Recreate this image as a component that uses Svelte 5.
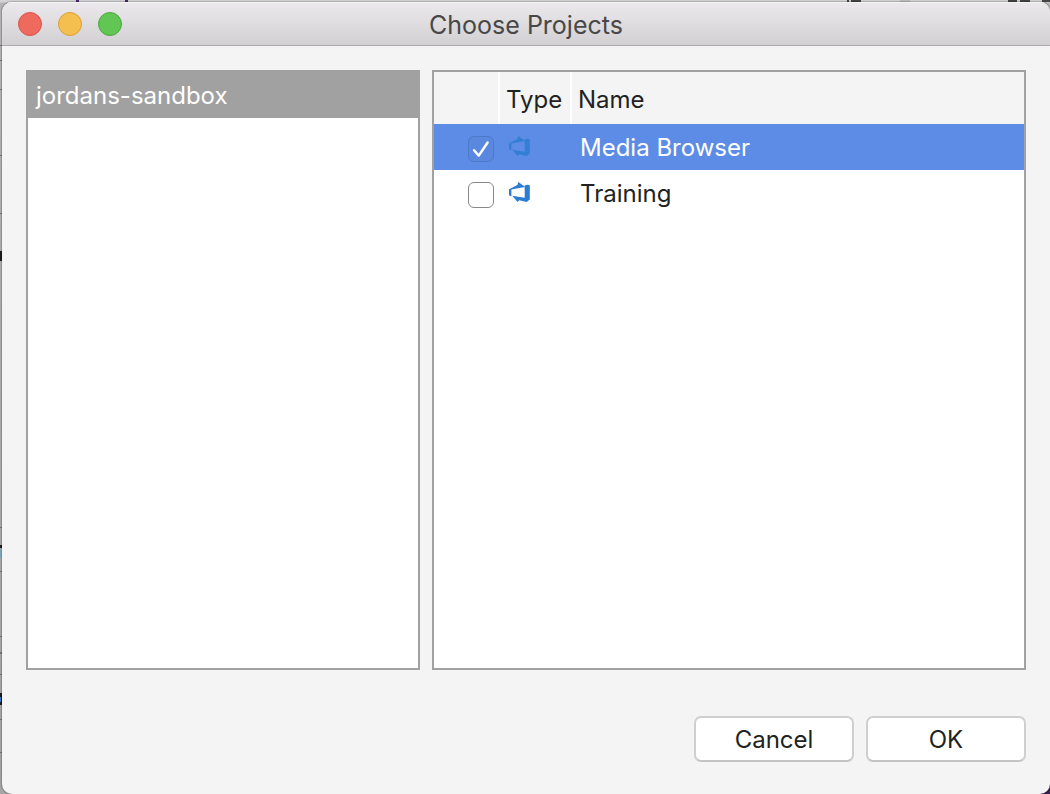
<script>
  const accounts = ['jordans-sandbox'];
  let activeAccount = $state('jordans-sandbox');
  let activeProject = $state('Media Browser');
  let projects = $state([
    { name: 'Media Browser', checked: true },
    { name: 'Training', checked: false },
  ]);
</script>

<div class="desktop">
  <svg class="behind" width="1050" height="794" aria-hidden="true">
    <path fill="#4b2a74" d="M76 0h3v2h-3zM125 0h3v2h-3z" />
    <path fill="#444" d="M847 0h2v2h-2zM851 0h10v2h-10zM1008 0h9v2h-9zM1020 0h10v2h-10zM1042 0h8v2h-8z" />
    <path fill="#bdbdbd" d="M900 0h10v2h-10z" />
    <path fill="#777" d="M0 45h2v1H0zM0 60h2v1H0zM0 89h2v1H0zM0 155h2v1H0zM0 213h2v1H0zM0 527h2v1H0zM0 571h2v1H0zM0 636h2v1H0zM0 652h2v2H0zM0 674h2v1H0zM0 719h2v1H0zM0 752h2v1H0z" />
    <path fill="#1d1d20" d="M0 251h2v10H0zM0 545h2v3H0zM0 693h2v12H0z" />
    <path fill="#7fa9ba" d="M0 549h1v9H0z" />
    <path fill="#3a78c0" d="M0 697h1v5H0z" />
    <path fill="#392052" d="M1038 782h12v12h-12z" />
  </svg>
  <main class="window">
    <header class="titlebar">
      <div class="lights">
        <button class="light close" aria-label="Close"></button>
        <button class="light minimize" aria-label="Minimize"></button>
        <button class="light expand" aria-label="Zoom"></button>
      </div>
      <h1>Choose Projects</h1>
    </header>

    <div class="content">
      <div class="panels">
        <nav class="panel accounts" aria-label="Accounts">
          {#each accounts as account}
            <button
              class="account"
              class:active={account === activeAccount}
              onclick={() => (activeAccount = account)}>{account}</button>
          {/each}
        </nav>

        <section class="panel" aria-label="Projects">
          <table>
            <thead>
              <tr>
                <th class="pick" aria-label="Selected"></th>
                <th class="type">Type</th>
                <th class="name">Name</th>
              </tr>
            </thead>
            <tbody>
              {#each projects as project, i}
                <tr
                  class:selected={project.name === activeProject}
                  onclick={() => (activeProject = project.name)}>
                  <td class="pick">
                    <span class="check">
                      <input type="checkbox" aria-labelledby="project-{i}" bind:checked={project.checked} />
                      <svg viewBox="0 0 26 26" width="26" height="26" aria-hidden="true">
                        <path d="M6 14.2 10.8 19.6 19.6 6.5" fill="none" stroke="#fff" stroke-width="2.4" stroke-linecap="round" stroke-linejoin="round" />
                      </svg>
                    </span>
                  </td>
                  <td class="type">
                    <svg class="service" viewBox="-1 0 22 22" width="22" height="22" aria-hidden="true">
                      <path fill="#2b7cd3" d="M0 7.2 8.4 2.9 9.3 0 15.2 4.2 15.7 5 2.4 7.5V14H1.4L0 13.2ZM15.7 3.6 18 2.7 20.8 3.3V17.6L17.7 20 10.2 18.2 8.6 20 3.2 13.8 15.7 15.7Z" />
                    </svg>
                  </td>
                  <td class="name" id="project-{i}">{project.name}</td>
                </tr>
              {/each}
            </tbody>
          </table>
        </section>
      </div>

      <footer>
        <button class="action">Cancel</button>
        <button class="action">OK</button>
      </footer>
    </div>
  </main>
</div>

<style>
  :global(body) {
    margin: 0;
  }

  .desktop {
    position: relative;
    display: flex;
    box-sizing: border-box;
    min-height: 100vh;
    padding: 2px 0 0 2px;
    overflow: hidden;
    background: linear-gradient(#d4d4d4 2px, #b4b4b4 3px, #a5a5a5);
    color: #222;
    font-family: Inter, sans-serif;
    font-size: 24px;
    line-height: 32px;
  }

  .behind {
    position: absolute;
    top: 0;
    left: 0;
  }

  .window {
    position: relative;
    display: flex;
    flex: 1;
    flex-direction: column;
    overflow: hidden;
    border-radius: 10px;
    background: #f4f4f4;
    box-shadow: 0 0 1px 1px rgb(0 0 0 / 20%);
  }

  .titlebar {
    display: grid;
    grid-template-columns: 1fr auto 1fr;
    align-items: center;
    box-sizing: border-box;
    height: 44px;
    padding: 0 16px;
    border-bottom: 1px solid #acaaac;
    background: linear-gradient(#ebe9eb, #d2d0d2);
    box-shadow: inset 0 1px #f6f5f6;
  }

  h1 {
    margin: 0;
    padding-top: 2px;
    color: #484848;
    font-size: 25px;
    font-weight: inherit;
  }

  .lights {
    display: flex;
    gap: 16px;
  }

  .light {
    width: 24px;
    height: 24px;
    padding: 0;
    border: 1px solid;
    border-radius: 50%;
  }

  .close {
    border-color: #d9534b;
    background: #ee6a5f;
  }

  .minimize {
    border-color: #d9a03c;
    background: #f5bf4f;
  }

  .expand {
    border-color: #4aa73c;
    background: #61c654;
  }

  .content {
    display: flex;
    flex: 1;
    flex-direction: column;
    gap: 46px;
    padding: 24px 24px 32px;
  }

  .panels {
    display: grid;
    flex: 1;
    grid-template-columns: 394fr 594fr;
    gap: 12px;
  }

  .panel {
    border: 2px solid #a1a1a1;
    background: #fff;
  }

  .account {
    display: block;
    width: 100%;
    height: 46px;
    padding: 2px 8px 0;
    border: 0;
    background: transparent;
    color: inherit;
    font: inherit;
    text-align: left;
  }

  .account.active {
    background: #a1a1a1;
    color: #fff;
  }

  table {
    width: 100%;
    border-collapse: separate;
    border-spacing: 0;
    table-layout: fixed;
  }

  th,
  td {
    box-sizing: border-box;
    font-weight: inherit;
    text-align: left;
  }

  th {
    height: 52px;
    padding: 4px 6px 0;
    border-right: 2px solid #fff;
    background: #f4f4f4;
  }

  th.pick {
    width: 66px;
  }

  th.type {
    width: 72px;
  }

  th.name {
    border-right: 0;
  }

  td {
    height: 46px;
    padding: 0 8px;
  }

  td.name {
    padding-top: 2px;
  }

  td.pick {
    padding: 4px 0 0 34px;
  }

  .selected {
    background: #5c8ce6;
    color: #fff;
  }

  .check {
    display: grid;
    width: 26px;
    height: 26px;
  }

  .check input,
  .check svg {
    grid-area: 1 / 1;
  }

  .check input {
    width: 26px;
    height: 26px;
    margin: 0;
    border: 1px solid #888;
    border-radius: 6px;
    appearance: none;
    background: #fff;
  }

  .check input:checked {
    border-color: #4f78c8;
    background: #5a88df;
  }

  .check svg {
    pointer-events: none;
  }

  .check input:not(:checked) + svg {
    visibility: hidden;
  }

  .service {
    display: block;
  }

  .selected .service {
    opacity: 0.8;
  }

  footer {
    display: flex;
    justify-content: flex-end;
    gap: 12px;
  }

  .action {
    width: 160px;
    height: 46px;
    padding: 2px 0 0;
    border: 2px solid #cfcfcf;
    border-bottom-color: #c4c4c4;
    border-radius: 7px;
    background: #fff;
    color: inherit;
    font: inherit;
  }
</style>
